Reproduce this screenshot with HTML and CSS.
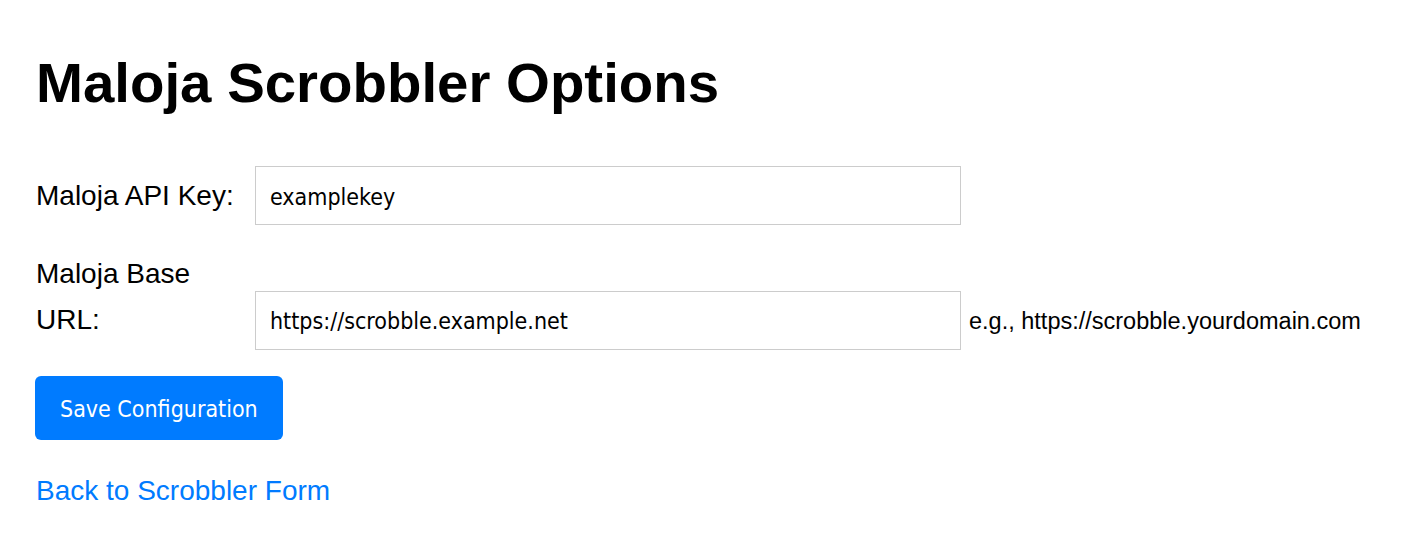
FILE: index.html
```html
<!DOCTYPE html>
<html lang="en">
<head>
<meta charset="utf-8">
<title>Maloja Scrobbler Options</title>
<link rel="stylesheet" href="styles.css">
</head>
<body>
<div class="page">
  <h1 class="title">Maloja Scrobbler Options</h1>
  <form class="form">
    <div class="row">
      <label class="label" for="apikey">Maloja API Key:</label>
      <input class="field" id="apikey" type="text" value="examplekey">
    </div>
    <div class="row">
      <label class="label" for="baseurl">Maloja Base URL:</label>
      <input class="field" id="baseurl" type="text" value="https://scrobble.example.net">
      <span class="hint">e.g., https://scrobble.yourdomain.com</span>
    </div>
    <button class="save" type="button">Save Configuration</button>
  </form>
  <p class="back"><a class="back-link" href="#">Back to Scrobbler Form</a></p>
</div>
</body>
</html>
```

FILE: styles.css
```css
html, body {
  margin: 0;
  padding: 0;
  background: #ffffff;
}

.page {
  padding: 51px 36px 0 36px;
  font-family: "Liberation Sans", Arial, sans-serif;
  color: #000000;
}

.title {
  margin: 0 0 51px 0;
  font-size: 56.4px;
  line-height: 64px;
  font-weight: bold;
}

.form {
  margin: 0;
}

.row {
  display: flex;
  align-items: last baseline;
  margin-bottom: 26px;
}

.label {
  flex: 0 0 219px;
  width: 219px;
  font-size: 28px;
  line-height: 46px;
}

.field {
  box-sizing: border-box;
  flex: 0 0 706px;
  width: 706px;
  height: 59px;
  margin: 0;
  padding: 2px 14px 0 14px;
  border: 1px solid #cccccc;
  border-radius: 0;
  font-family: "DejaVu Sans Condensed", "DejaVu Sans", sans-serif;
  font-size: 23px;
  color: #000000;
  background: #ffffff;
  outline: none;
}

.hint {
  margin-left: 8px;
  font-size: 23.5px;
  white-space: nowrap;
}

.save {
  display: block;
  box-sizing: border-box;
  height: 64px;
  margin: 0 0 0 -1px;
  padding: 3px 25px 0 25px;
  border: none;
  border-radius: 6px;
  background: #007bff;
  color: #ffffff;
  font-family: "DejaVu Sans Condensed", "DejaVu Sans", sans-serif;
  font-size: 23px;
  cursor: pointer;
}

.back {
  margin: 28px 0 0 0;
  font-size: 28px;
  line-height: 46px;
}

.back-link {
  color: #007bff;
  text-decoration: none;
}
```
